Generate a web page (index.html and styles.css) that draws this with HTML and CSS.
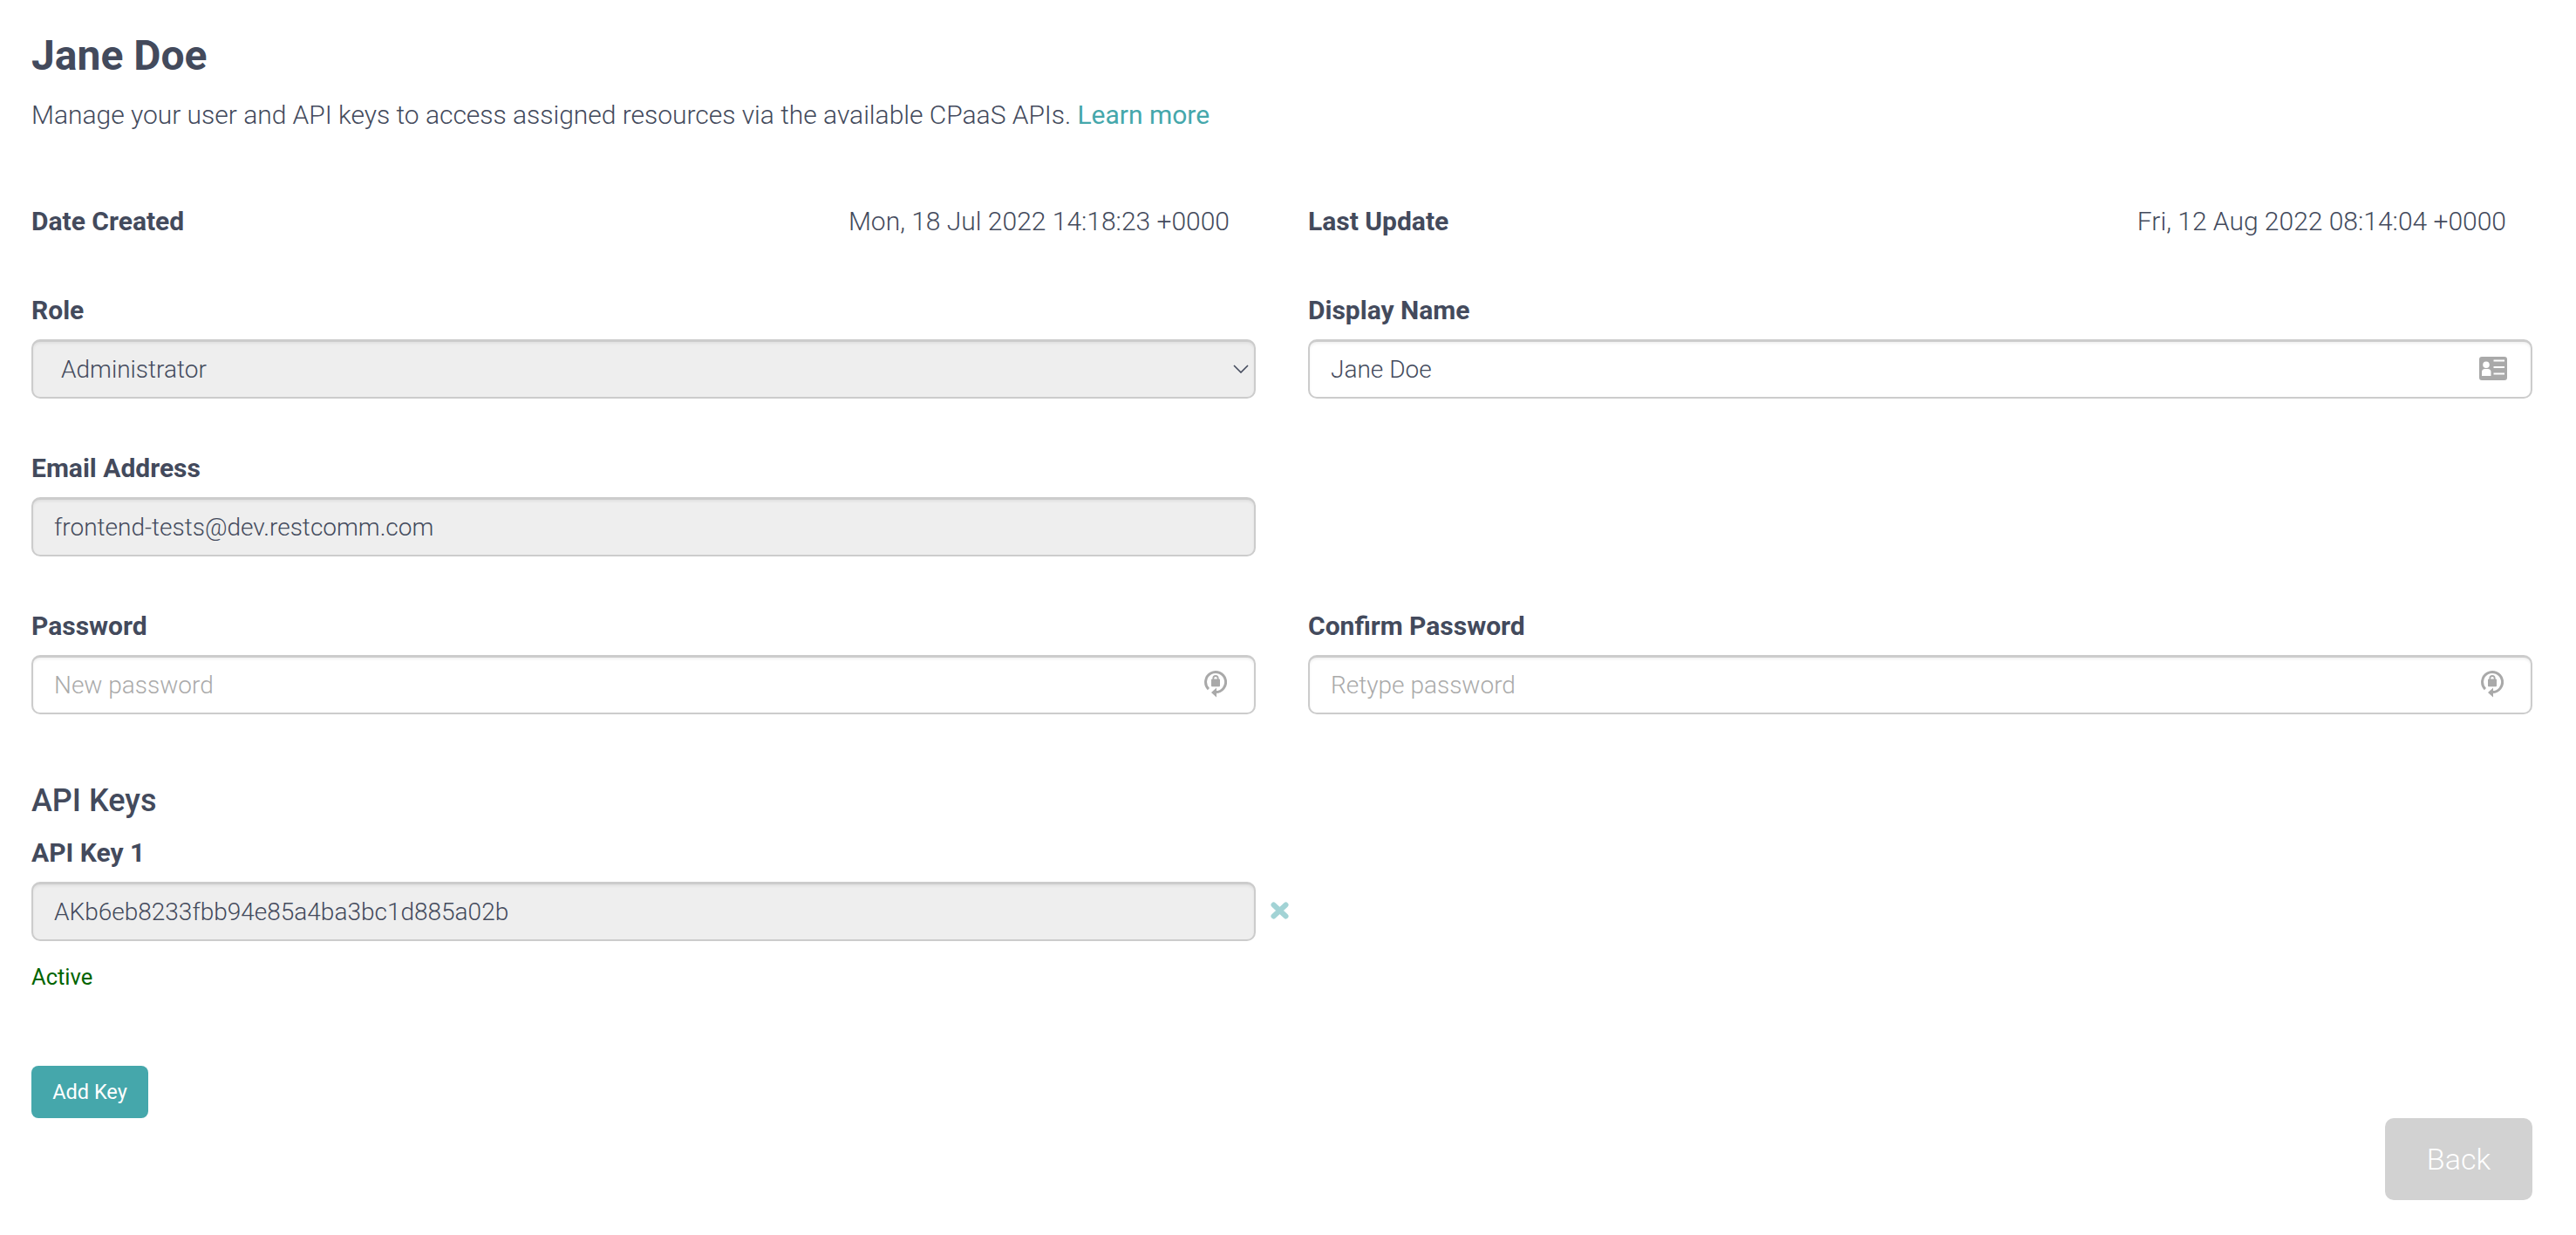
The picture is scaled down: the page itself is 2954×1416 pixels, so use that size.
FILE: index.html
```html
<!DOCTYPE html>
<html>
<head>
  <title>Jane Doe</title>
  <link rel="stylesheet" href="styles.css">
</head>
<body>
  <h1>Jane Doe</h1>
  <p class="intro">Manage your user and API keys to access assigned resources via the available CPaaS APIs. <a href="#">Learn more</a></p>

  <form class="grid">
    <div class="date-row"><b>Date Created</b><span>Mon, 18 Jul 2022 14:18:23 +0000</span></div>
    <div class="date-row"><b>Last Update</b><span>Fri, 12 Aug 2022 08:14:04 +0000</span></div>

    <div class="field">
      <label for="role">Role</label>
      <div class="control">
        <select id="role" class="input select" disabled>
          <option>Administrator</option>
        </select>
        <svg class="chevron" viewBox="0 0 18 10"><path d="M1 1l8 8 8-8" fill="none" stroke="#434a5c" stroke-width="1.6"/></svg>
      </div>
    </div>
    <div class="field">
      <label for="display">Display Name</label>
      <div class="control">
        <input id="display" class="input" type="text" value="Jane Doe">
        <svg class="icon card" viewBox="0 0 32 27"><path fill-rule="evenodd" fill="#a9a9a9" d="M3 0h26a3 3 0 0 1 3 3v21a3 3 0 0 1-3 3H3a3 3 0 0 1-3-3V3a3 3 0 0 1 3-3zM8 5.500a3.800 3.800 0 1 0 0 7.600a3.800 3.800 0 0 0 0-7.600zM3 22h10.500v-4.500c0-2.200-1.300-3.500-3.500-3.500H6.500C4.300 14 3 15.300 3 17.500zM16.500 3.500v2h12.500v-2zM16.500 11v2h12.500v-2zM16.500 18.500v2h12.500v-2z"/></svg>
      </div>
    </div>

    <div class="field">
      <label for="email">Email Address</label>
      <div class="control">
        <input id="email" class="input" type="text" value="frontend-tests@dev.restcomm.com" disabled>
      </div>
    </div>
    <div></div>

    <div class="field">
      <label for="password">Password</label>
      <div class="control">
        <input id="password" class="input" type="password" placeholder="New password">
        <svg class="icon lock" viewBox="0 0 26 32"><path fill="none" stroke="#a9a9a9" stroke-width="3" d="M4.900 22.100A11.500 11.500 0 1 1 13 25.500"/><path fill="#a9a9a9" d="M8 26l6-5.500v11zM9 10.500h8a1 1 0 0 1 1 1v6.800a1 1 0 0 1-1 1H9a1 1 0 0 1-1-1v-6.800a1 1 0 0 1 1-1z"/><path fill="none" stroke="#a9a9a9" stroke-width="1.800" d="M10.300 11V9.700a2.700 2.700 0 0 1 5.400 0V11"/></svg>
      </div>
    </div>
    <div class="field">
      <label for="confirm">Confirm Password</label>
      <div class="control">
        <input id="confirm" class="input" type="password" placeholder="Retype password">
        <svg class="icon lock" viewBox="0 0 26 32"><path fill="none" stroke="#a9a9a9" stroke-width="3" d="M4.900 22.100A11.500 11.500 0 1 1 13 25.500"/><path fill="#a9a9a9" d="M8 26l6-5.500v11zM9 10.500h8a1 1 0 0 1 1 1v6.800a1 1 0 0 1-1 1H9a1 1 0 0 1-1-1v-6.800a1 1 0 0 1 1-1z"/><path fill="none" stroke="#a9a9a9" stroke-width="1.800" d="M10.300 11V9.700a2.700 2.700 0 0 1 5.400 0V11"/></svg>
      </div>
    </div>
  </form>

  <h2>API Keys</h2>
  <div class="key-col">
    <label for="key1">API Key 1</label>
    <div class="control">
      <input id="key1" class="input" type="text" value="AKb6eb8233fbb94e85a4ba3bc1d885a02b" disabled>
      <svg class="remove" viewBox="0 0 21 20"><path d="M3.500 3.500l14 13M17.500 3.500l-14 13" fill="none" stroke="#a2d3d5" stroke-width="6" stroke-linecap="round"/></svg>
    </div>
    <div class="status">Active</div>
  </div>

  <button class="add-btn" type="button">Add Key</button>
  <div class="footer">
    <button class="back-btn" type="button">Back</button>
  </div>
</body>
</html>
```

FILE: styles.css
```css
body {
  margin: 0;
  padding: 0 50px 0 36px;
  background: #fff;
  color: #434a5c;
  font-family: Roboto, "Liberation Sans", sans-serif;
  font-size: 30px;
  font-weight: 300;
}
h1 {
  margin: 0;
  padding-top: 36px;
  font-size: 48px;
  line-height: 56px;
  font-weight: 700;
}
.intro {
  margin: 20px 0 0;
  font-size: 30px;
  line-height: 40px;
  letter-spacing: -0.02px;
}
.intro a {
  color: #45a7ab;
  font-weight: 400;
  text-decoration: none;
}
.grid {
  display: grid;
  grid-template-columns: 1404px 1404px;
  column-gap: 60px;
  margin-top: 82px;
}
.date-row {
  display: flex;
  justify-content: space-between;
  padding-right: 30px;
  line-height: 40px;
  margin-bottom: 62px;
}
.date-row b,
label {
  font-weight: 700;
  font-size: 30px;
}
label {
  display: block;
  line-height: 40px;
  margin-bottom: 13px;
}
.field {
  margin-bottom: 60px;
}
.control {
  position: relative;
}
.input {
  display: block;
  box-sizing: border-box;
  width: 100%;
  height: 68px;
  padding: 0 24px;
  border: 2px solid #ccc;
  border-top-width: 3px;
  border-radius: 10px;
  box-shadow: inset 0 2px 3px rgba(0, 0, 0, .06);
  background: #fff;
  color: #434a5c;
  font-family: inherit;
  font-size: 28px;
  font-weight: 300;
  opacity: 1;
  outline: none;
}
.input:disabled {
  background: #eee;
}
.input::placeholder {
  color: #aaa;
}
.select {
  appearance: none;
  padding-left: 32px;
}
.chevron {
  position: absolute;
  right: 8px;
  top: 29px;
  width: 18px;
  height: 10px;
}
.icon {
  position: absolute;
}
.card {
  top: 20px;
  right: 29px;
  width: 32px;
  height: 27px;
}
.lock {
  top: 17px;
  right: 33px;
  width: 26px;
  height: 32px;
}
h2 {
  margin: 17px 0 0;
  font-size: 36px;
  line-height: 44px;
  font-weight: 500;
}
.key-col {
  width: 1404px;
  margin-top: 18px;
}
.remove {
  position: absolute;
  left: 1421px;
  top: 23px;
  width: 21px;
  height: 20px;
}
.status {
  margin-top: 23px;
  color: #006400;
  font-size: 25.500px;
  font-weight: 400;
  line-height: 36px;
}
.add-btn {
  display: block;
  margin-top: 84px;
  width: 134px;
  height: 60px;
  padding: 0;
  border: none;
  border-radius: 8px;
  background: #45a7ab;
  color: #fff;
  font-family: inherit;
  font-size: 23.500px;
  font-weight: 400;
}
.footer {
  display: flex;
  justify-content: flex-end;
}
.back-btn {
  width: 169px;
  height: 94px;
  border: none;
  border-radius: 10px;
  background: #d2d2d2;
  color: #fff;
  font-family: inherit;
  font-size: 34px;
  font-weight: 300;
}
```
